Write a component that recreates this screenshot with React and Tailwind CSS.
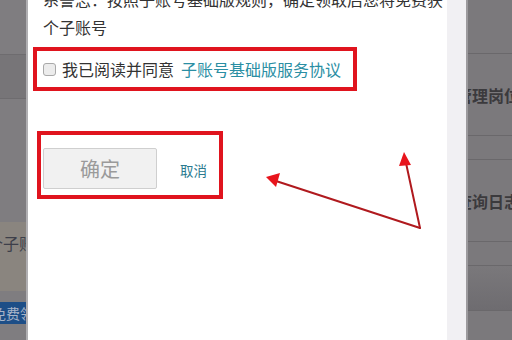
import React from 'react';

const font = { fontFamily: '"Noto Sans CJK SC", "Noto Sans", sans-serif' };

// left backdrop column (page behind the dialog)
const LeftStrip = () => (
  <div className="w-[26px] shrink-0 flex flex-col bg-[#7f7d80] overflow-hidden">
    <div className="h-[55px] border-b border-[#6e6c6f]" />
    <div className="h-[44px] bg-[#777578] border-b border-[#6e6c6f]" />
    <div className="h-[123px]" />
    <div className="h-[69px] bg-[#8a857f] pt-[11px]">
      <div className="ml-[-13px] whitespace-nowrap text-[16px] leading-[20px] text-[#3d3f4a]">个子账号</div>
    </div>
    <div className="h-[11px]" />
    <div className="h-[22px] bg-[#1d4e87] flex items-center">
      <span className="ml-[-8px] whitespace-nowrap text-[14px] text-[#a8b4c8]">免费领取</span>
    </div>
    <div className="flex-1" />
  </div>
);

// right backdrop column
const RightStrip = () => (
  <div className="flex-1 flex flex-col bg-[#7b797c] overflow-hidden">
    <div className="h-[54px] border-b border-[#6a686b]" />
    <div className="h-[82px] border-b border-[#6a686b] flex items-center">
      <span className="ml-[-12px] whitespace-nowrap text-[16px] font-bold text-[#3b3a3d]">管理岗位</span>
    </div>
    <div className="h-[24px] border-b border-[#6a686b]" />
    <div className="h-[82px] border-b border-[#6a686b] flex items-center">
      <span className="ml-[-12px] whitespace-nowrap text-[16px] font-bold text-[#3b3a3d]">查询日志</span>
    </div>
    <div className="h-[24px] border-b border-[#6a686b]" />
    <div className="h-[45px] bg-gradient-to-b from-[#7a787b] to-[#6e6c70] border-b border-[#6a686b]" />
    <div className="flex-1" />
  </div>
);

const Arrows = () => (
  <svg className="absolute inset-0 pointer-events-none" width="512" height="340" viewBox="0 0 512 340">
    <g stroke="#b01a1e" strokeWidth="2" strokeLinecap="round">
      <line x1="420" y1="228" x2="276" y2="181" />
      <line x1="420" y1="228" x2="406" y2="163" />
    </g>
    <polygon points="266,177 280,173 276,187" fill="#e8141c" />
    <polygon points="404,152 411,165 399,166" fill="#e8141c" />
  </svg>
);

export default function App() {
  return (
    <div className="relative w-[512px] h-[340px] overflow-hidden flex bg-white" style={font}>
      <LeftStrip />
      <div className="w-[2px] shrink-0 bg-[#b0afb2]" />

      {/* dialog body */}
      <div className="w-[419px] shrink-0 bg-white flex flex-col">
        <div className="mt-[-15px] pl-[15px] text-[16px] leading-[28px] text-[#333] whitespace-nowrap">
          <div>系警志：按照子账号基础版规则，确定领取后您将免费获</div>
          <div>个子账号</div>
        </div>

        <div className="mt-[6px] ml-[5px] w-[324px] h-[44px] border-4 border-[#e0141e] flex items-center pl-[6px]">
          <span className="w-[13px] h-[13px] rounded-[3px] border border-[#a9a9a9] bg-[#ececec]" />
          <span className="ml-[6px] text-[16px] text-[#333] whitespace-nowrap">我已阅读并同意</span>
          <span className="ml-[7px] text-[16px] text-[#2a8ea3] whitespace-nowrap">子账号基础版服务协议</span>
        </div>

        <div className="mt-[40px] ml-[9px] w-[186px] h-[68px] border-4 border-[#e0141e] flex items-start pt-[13px] pl-[2px]">
          <div className="w-[114px] h-[41px] border border-[#cfcfcf] bg-[#f1f1f1] rounded-[2px] flex items-center justify-center text-[20px] text-[#9a9a9a]">
            确定
          </div>
          <span className="ml-[23px] mt-[13px] text-[13.5px] leading-[18px] text-[#2b7a8f]">取消</span>
        </div>
      </div>

      <div className="w-[19px] shrink-0 bg-[#f1f0f3]" />
      <div className="w-[2px] shrink-0 bg-[#9c9a9d]" />
      <RightStrip />

      <Arrows />
    </div>
  );
}
